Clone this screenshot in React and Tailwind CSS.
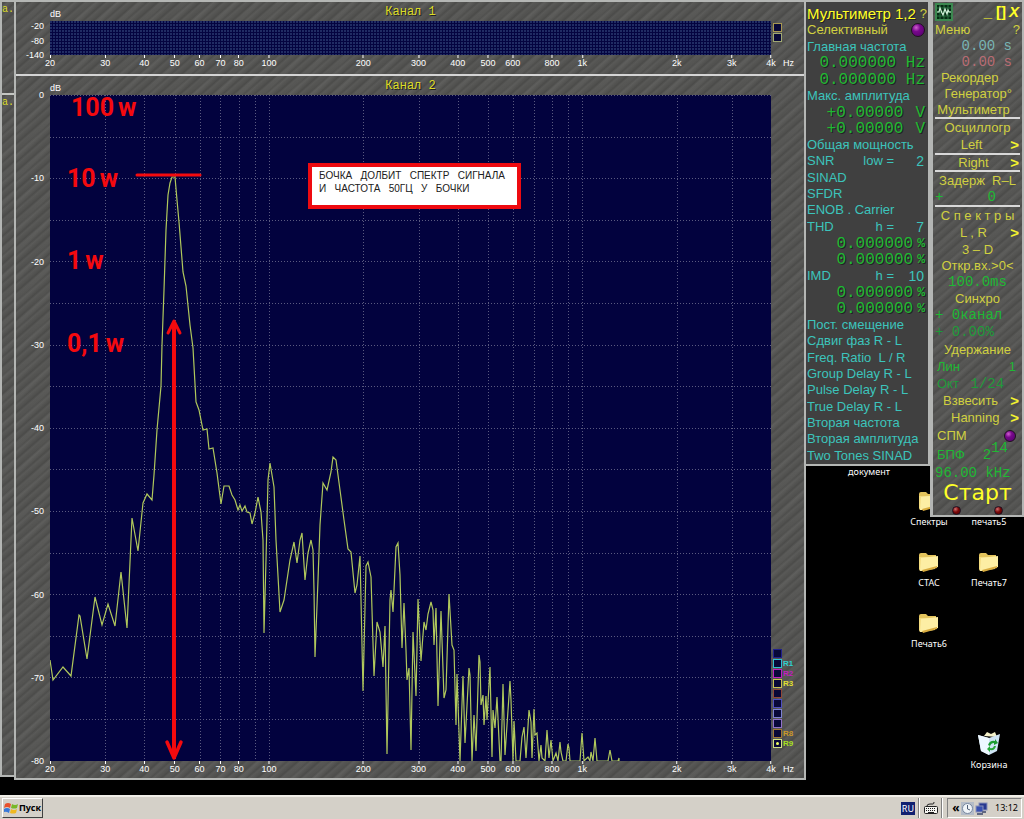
import clsx from 'clsx';

const HATCH = 'bg-[#555553] bg-[repeating-linear-gradient(139deg,#00000000_0px,#00000016_2px,#ffffff0a_4px,#00000000_7px),repeating-linear-gradient(134deg,#0000000a_0px,#ffffff06_5px,#00000008_11px,#0000000a_17px)]';

const F_MIN = 20;
const F_MAX = 4000;
const freqShare = (f) => Math.log(f / F_MIN) / Math.log(F_MAX / F_MIN);

const X_TICKS = [
    [20, '20'], [30, '30'], [40, '40'], [50, '50'], [60, '60'], [70, '70'], [80, '80'], [100, '100'],
    [200, '200'], [300, '300'], [400, '400'], [500, '500'], [600, '600'], [800, '800'],
    [1000, '1k'], [2000, '2k'], [3000, '3k'], [4000, '4k'],
];

const GRID_FREQS = [30, 40, 50, 60, 70, 80, 90, 100, 200, 300, 400, 500, 600, 700, 800, 900, 1000, 2000, 3000];

const SPECTRUM = `50,660 53,680 63,667 71,676 79,615 80,616 87,659 95,597 102,625 108,604 115,626 121,572 127,628
    132,518 138,551 143,503 147,494 152,500 154,475 157,430 161,386 162,345 164,290 166,230 168,195 170,183 172,177
    175,177 177,200 179,222 183,272 186,286 190,325 193,348 196,402 199,410 203,430 207,429 209,449 213,448 217,473
    221,504 224,486 229,486 232,495 235,500 238,510 240,505 242,511 245,506 247,512 250,513 252,524 255,513 258,497
    261,512 263,540 264,633 266,560 268,480 270,463 274,487 276,540 280,612 284,600 290,560 294,542 297,563 300,540
    302,533 305,580 308,553 311,540 313,550 314,590 315,657 318,580 320,525 323,483 327,490 331,472 333,457 336,460
    340,490 344,520 348,549 351,552 355,593 357,585 360,556 361,600 363,691 366,566 368,562 371,577 374,676 377,622
    380,632 383,667 385,626 387,754 390,600 391,590 393,612 396,547 398,543 400,575 402,648 404,603 406,650 407,680
    409,668 411,750 413,632 416,696 418,599 421,661 424,622 426,630 428,614 431,602 433,610 434,645 436,608 438,706
    441,611 444,698 446,690 449,594 452,645 454,650 456,725 457,674 460,761 463,676 465,743 469,668 470,675 472,761
    474,715 476,751 479,655 480,662 481,705 483,695 484,725 486,696 487,720 490,667 492,757 493,710 495,728 497,697
    500,761 501,761 503,684 505,755 507,725 510,681 511,700 513,761 514,721 516,761 520,761 522,737 524,727 526,758
    529,710 531,722 532,758 534,709 535,735 537,733 539,761 541,745 542,758 545,761 547,730 549,758 551,740 553,761
    556,753 558,761 560,742 561,752 563,761 566,761 568,744 569,748 570,761 580,761 582,733 584,761 588,757 590,761
    591,752 593,761 595,738 597,761 608,761 610,750 612,761 618,761 619,758 619,761`;

const MARKERS = [
    { color: 'border-[#20208c]' },
    { color: 'border-[#30c0d0]', name: 'R1', text: 'text-[#30d0d0]' },
    { color: 'border-[#c020c0]', name: 'R2', text: 'text-[#c020c0]' },
    { color: 'border-[#c8c050]', name: 'R3', text: 'text-[#e0e030]' },
    { color: 'border-[#904838]' },
    { color: 'border-[#5050c0]' },
    { color: 'border-[#7c80d0]' },
    { color: 'border-[#9070c8]' },
    { color: 'border-[#a07838]', name: 'R8', text: 'text-[#c89828]' },
    { color: 'border-[#d0e080]', name: 'R9', text: 'text-[#a8e020]', on: true },
];

const FREE_MARKERS = [{ color: 'border-[#a89850]' }, { color: 'border-[#a0a870]' }];

function Markers({ items, id }) {
    return (
        <div className="flex flex-col gap-px">
            {items.map((m, i) => (
                <label key={i} className="flex h-[9px] items-center gap-px">
                    <span className={clsx('relative flex size-[9px] items-center justify-center border bg-[#080838]', m.color)}>
                        <input type="checkbox" defaultChecked={m.on} aria-label={m.name || `${id}-${i + 1}`} className="peer absolute inset-0 appearance-none" />
                        <span className="size-[3px] rounded-full peer-checked:bg-[#f0ff60]"></span>
                    </span>
                    <span className={clsx('text-[8px] leading-[9px] font-bold', m.text)}>{m.name}</span>
                </label>
            ))}
        </div>
    );
}

function FreqAxis({ height }) {
    return (
        <>
            <div></div>
            <div className={clsx('relative', height)}>
                {X_TICKS.map(([f, text]) => (
                    <div key={f} className="absolute top-0 flex -translate-x-1/2 flex-col items-center" style={{ left: `${freqShare(f) * 100}%` }}>
                        <span className="h-[3px] w-px bg-white"></span>
                        <span className="text-[9px] leading-[11px]">{text}</span>
                    </div>
                ))}
            </div>
            <div className="pt-[3px] pl-3 text-[9px] leading-[11px]">Hz</div>
        </>
    );
}

function ChannelHeader({ title, height }) {
    return (
        <div className={clsx('col-start-2 grid grid-cols-3 items-center', height)}>
            <span className="self-end text-[9px] leading-[13px]">dB</span>
            <h2 className="text-center font-['Liberation_Mono',monospace] text-[12px] leading-4 text-[#dcdc28] [text-shadow:1px_1px_0_#222]">{title}</h2>
        </div>
    );
}

function LevelAxis({ levels }) {
    return (
        <div className="relative">
            {levels.map(([share, text]) => (
                <span key={text} className="absolute right-[6px] -translate-y-1/2 text-[9px] leading-[10px]" style={{ top: `${share * 100}%` }}>{text}</span>
            ))}
        </div>
    );
}

function Plot() {
    return (
        <svg className="absolute inset-0 size-full" viewBox="50 95 721 666" preserveAspectRatio="none" fill="none">
            <g stroke="#5a5a80" strokeDasharray="1 2" shapeRendering="crispEdges">
                {Array.from({ length: 17 }, (_, i) => (
                    <line key={i} x1="50" x2="771" y1={95.5 + Math.round(i * 41.6)} y2={95.5 + Math.round(i * 41.6)} />
                ))}
                {GRID_FREQS.map((f) => {
                    const x = Math.round(50 + 721 * freqShare(f)) + 0.5;
                    return <line key={f} x1={x} x2={x} y1="95" y2="761" />;
                })}
            </g>
            <polyline points={SPECTRUM} stroke="#b0c85c" strokeWidth="1.2" />
            <g stroke="#f40a0e" strokeLinecap="round" strokeLinejoin="round">
                <path d="M137 175H200" strokeWidth="3" />
                <path d="M174 324V756" strokeWidth="4" />
                <path d="M168 333L174 321L180 333M174 322V332" strokeWidth="3" />
                <path d="M167 742L174 758L181 742M174 740V758" strokeWidth="3.5" />
            </g>
        </svg>
    );
}

const NOTES = [
    { value: '100', unit: 'w', place: 'left-[21px] top-0' },
    { value: '10', unit: 'w', place: 'left-[17px] top-[71px]' },
    { value: '1', unit: 'w', place: 'left-[17px] top-[153px]' },
    { value: '0,1', unit: 'w', place: 'left-[17px] top-[236px]' },
];

function SpectrumWindow() {
    return (
        <main className={clsx('flex min-w-0 flex-1 flex-col border-2 border-[#b4b6b4] text-white', HATCH)}>
            <section className="grid grid-cols-[34px_1fr_33px] border-b-2 border-[#d4d4d4]">
                <ChannelHeader title="Канал 1" height="h-[19px]" />
                <div></div>
                <LevelAxis levels={[[0.15, '-20'], [0.6, '-80'], [1, '-140']]} />
                <div className="h-[34px] bg-[#040440] bg-[radial-gradient(circle_at_1px_1px,#34487c_0.5px,transparent_1px)] bg-size-[3px_3px]"></div>
                <div className="h-5 pt-[2px] pl-[2px]">
                    <Markers items={FREE_MARKERS} id="ch1" />
                </div>
                <FreqAxis height="h-[19px]" />
            </section>
            <section className="grid min-h-0 flex-1 grid-cols-[34px_1fr_33px] grid-rows-[19px_1fr_17px]">
                <ChannelHeader title="Канал 2" height="h-[19px]" />
                <div></div>
                <LevelAxis levels={[0, 1, 2, 3, 4, 5, 6, 7, 8].map((n) => [n / 8, n ? `-${n * 10}` : '0'])} />
                <div className="relative bg-[#02023e]">
                    <Plot />
                    {NOTES.map((n) => (
                        <p key={n.value} className={clsx("absolute flex items-end gap-1 font-['Roboto',sans-serif] text-[25px] leading-[26px] font-bold whitespace-nowrap text-[#f40a0e]", n.place)}>
                            {n.value}<span>{n.unit}</span>
                        </p>
                    ))}
                    <p className="absolute top-[68px] left-[258px] h-[46px] w-[213px] border-4 border-[#ee0a10] bg-white pt-[2px] pl-[7px] text-[10px] leading-[13px] whitespace-pre text-[#202020]">
                        {'БОЧКА   ДОЛБИТ   СПЕКТР   СИГНАЛА\nИ   ЧАСТОТА   50ГЦ   У   БОЧКИ'}
                    </p>
                </div>
                <div className="flex flex-col justify-end pb-[13px] pl-[2px]">
                    <Markers items={MARKERS} id="ch2" />
                </div>
                <FreqAxis height="h-[17px]" />
            </section>
        </main>
    );
}

function BackWindow() {
    return (
        <aside className={clsx("mb-[3px] flex w-3.5 shrink-0 flex-col border-2 border-r-0 border-[#b4b6b4] font-['Liberation_Mono',monospace] text-[10px] leading-4 text-[#dcdc28]", HATCH)}>
            <div className="h-[93px] border-b-2 border-[#c4c6c2]">а.</div>
            <div>а.</div>
        </aside>
    );
}

function Led({ className }) {
    return <span className={clsx('shrink-0 rounded-full border border-[#201020]', className)}></span>;
}

const PURPLE = 'bg-[radial-gradient(circle_at_35%_30%,#d060d0,#78088c_35%,#500068)]';
const RED = 'size-[9px] bg-[radial-gradient(circle_at_35%_30%,#d07070,#7c0808_45%,#500000)]';

const METERS = [
    { name: 'Главная частота', values: ['0.000000 Hz', '0.000000 Hz'] },
    { name: 'Макс. амплитуда', values: ['+0.00000', '+0.00000'], unit: 'V' },
    { name: 'Общая мощность' },
    { name: 'SNR', param: 'low =', amount: '2' },
    { name: 'SINAD' },
    { name: 'SFDR' },
    { name: 'ENOB . Carrier' },
    { name: 'THD', param: 'h =', amount: '7', values: ['0.000000', '0.000000'], unit: '%' },
    { name: 'IMD', param: 'h =', amount: '10', values: ['0.000000', '0.000000'], unit: '%' },
    { name: 'Пост. смещение' },
    { name: 'Сдвиг фаз R - L' },
    { name: 'Freq. Ratio  L / R' },
    { name: 'Group Delay R - L' },
    { name: 'Pulse Delay R - L' },
    { name: 'True Delay R - L' },
    { name: 'Вторая частота' },
    { name: 'Вторая амплитуда' },
    { name: 'Two Tones SINAD' },
];

function Meter({ meter }) {
    return (
        <>
            <button className="flex items-center whitespace-pre text-[#3cc4bc]">
                {meter.name}
                {meter.param && <span className="ml-auto">{meter.param}</span>}
                {meter.amount && <span className="w-[34px] pr-1 text-right text-[14px]">{meter.amount}</span>}
            </button>
            {meter.values?.map((v, i) => (
                <div key={i} className="flex items-center justify-end pt-px pr-[3px] font-['Liberation_Mono',monospace] text-[16px] leading-4 whitespace-pre text-[#20b834]">
                    {v}
                    {meter.unit === 'V' && <span className="pl-3">V</span>}
                    {meter.unit === '%' && <span className="pl-1 text-[13px] font-bold">%</span>}
                </div>
            ))}
        </>
    );
}

function Multimeter() {
    return (
        <section className="w-[124px] shrink-0 self-start border-2 border-l-0 border-[#b4b6b4] bg-[#404040] pl-px text-[13px] leading-4 text-[#d0d040] [text-shadow:1px_1px_0_#222]">
            <header className="flex h-5 items-center justify-between pt-[3px] pr-px">
                <h1 className="text-[15px] leading-4 font-medium whitespace-nowrap text-[#ffff28]">Мультиметр 1,2</h1>
                <button>?</button>
            </header>
            <div className="grid h-[442px] auto-rows-fr">
                <button className="flex items-center justify-between pr-[3px]">Селективный<Led className={clsx('size-3.5', PURPLE)} /></button>
                {METERS.map((m) => <Meter key={m.name} meter={m} />)}
            </div>
        </section>
    );
}

function Row({ children, className = 'h-[17px] justify-center', arrow }) {
    return (
        <button className={clsx('relative flex w-full items-center whitespace-pre', className)}>
            {children}
            {arrow && <span className="absolute right-px text-[15px] font-bold text-[#f4f430]">&gt;</span>}
        </button>
    );
}

const MONO = "font-['Liberation_Mono',monospace] text-[14px] text-[#20b834]";
const RULE = 'border-b-2 border-[#d8d8d8]';

function ControlPanel() {
    return (
        <aside className={clsx('w-[94px] shrink-0 self-start border-2 border-l-[3px] border-[#b4b6b4] px-0.5 text-[13px] leading-4 text-[#d0d040] [text-shadow:1px_1px_0_#222]', HATCH)}>
            <header className="flex h-[19px] items-center text-[15px] font-bold text-[#ffff28]">
                <svg className="mr-auto" width="18" height="18" viewBox="0 0 18 18" fill="none">
                    <rect x="1" y="1" width="16" height="16" fill="#062c14" stroke="#3c8850" strokeWidth="2" />
                    <path d="M5 2V16M9 2V16M13 2V16M2 5H16M2 9H16M2 13H16" stroke="#287040" />
                    <path d="M2 9H4L5 5L7 10L8 12L10 6L12 11L13 7L14 9H16" stroke="#d0f0d8" strokeWidth="1.2" />
                </svg>
                <button className="w-3">_</button>
                <button className="w-3.5">[]</button>
                <button className="w-3 italic">X</button>
            </header>
            <div className="flex h-[17px] items-center justify-between"><button>Меню</button><button>?</button></div>
            <Row className="h-4 justify-end pr-2 font-['Liberation_Mono',monospace] text-[14px] text-[#78b4b4]">0.00 s</Row>
            <Row className="h-4 justify-end pr-2 font-['Liberation_Mono',monospace] text-[14px] text-[#b86c74]">0.00 s</Row>
            <Row className="h-4 pl-1.5">Рекордер</Row>
            <Row className="h-4 justify-end pr-2">Генератор°</Row>
            <Row className={clsx('h-[17px] justify-center pr-2', RULE)}>Мультиметр</Row>
            <Row>Осциллогр</Row>
            <Row className={clsx('h-[19px] justify-center pr-3', RULE)} arrow>Left</Row>
            <Row className={clsx('h-[17px] justify-center pr-2', RULE)} arrow>Right</Row>
            <Row>Задерж  R–L</Row>
            <Row className={clsx('h-[18px] justify-between pr-6', MONO, RULE)}><span>+</span><span>0</span></Row>
            <Row>С п е к т р ы</Row>
            <Row className="h-[17px] justify-center pr-2" arrow>L , R</Row>
            <Row>3 – D</Row>
            <Row className="h-4 justify-center">{'Откр.вх.>0<'}</Row>
            <Row className={clsx('h-4 justify-center', MONO)}>100.0ms</Row>
            <Row>Синхро</Row>
            <Row className={clsx('h-4', MONO)}>+ 0канал</Row>
            <Row className="h-[18px] font-['Liberation_Mono',monospace] text-[14px] text-[#1f9a3a]">+ 0.00%</Row>
            <Row>Удержание</Row>
            <Row className="h-[17px] justify-between pr-1 pl-0.5 text-[#20b834]"><span>Лин</span><span>1</span></Row>
            <Row className="h-[17px] gap-2 pl-0.5 text-[#1f9a3a]">Окт <span className="font-['Liberation_Mono',monospace] text-[14px]">1/24</span></Row>
            <Row className="h-[17px] pl-2" arrow>Взвесить</Row>
            <Row className="h-[17px] pl-4" arrow>Hanning</Row>
            <Row className="h-[19px] justify-between pr-1 pl-0.5">СПМ<Led className={clsx('size-3', PURPLE)} /></Row>
            <Row className="h-5 justify-between pr-3 pl-0.5 text-[#20b834]">
                <span>БПФ</span>
                <span className="font-['Liberation_Mono',monospace] text-[14px]">2<sup className="text-[14px] leading-none">14</sup></span>
            </Row>
            <Row className={clsx('h-4', MONO)}>96.00 kHz</Row>
            <Row className="h-6 justify-center font-['DejaVu_Sans',sans-serif] text-[22px] leading-6 text-[#ffff28]">Старт</Row>
            <div className="flex h-[10px] items-center justify-between px-[17px]"><Led className={RED} /><Led className={RED} /></div>
        </aside>
    );
}

function Folder() {
    return (
        <svg width="22" height="22" viewBox="0 0 22 22">
            <path d="M1 4Q1 2 3 2H8L10 4H18V8H1Z" fill="#e4c45c" />
            <path d="M1 6H17L17 18L3 20Q1 20 1 18Z" fill="#f4dc80" />
            <path d="M3 7L20 5V16L5 20H2Z" fill="#fdeea4" />
            <path d="M4 19L19 15V17L5 21Z" fill="#d8ac40" />
        </svg>
    );
}

function RecycleBin() {
    return (
        <svg width="24" height="24" viewBox="0 0 24 24">
            <path d="M7 5L10 1L14 3L18 1L20 6Z" fill="#f4f0c8" />
            <path d="M1 4L12 7L23 3L20 20L12 24L4 20Z" fill="#cfe4f4" />
            <path d="M1 4L12 7V24L4 20Z" fill="#eef8ff" />
            <path d="M11 14Q13 9 18 10V8L21 12L17 14V12Q14 12 13 15Z" fill="#1c9c30" />
            <path d="M19 15Q18 20 13 19V21L10 18L13 15V17Q16 18 17 15Z" fill="#28a838" />
        </svg>
    );
}

const SHORTCUTS = [
    { name: 'документ', place: 'right-[125px] top-[440px]' },
    { name: 'Спектры', place: 'right-[65px] top-[490px]' },
    { name: 'печать5', place: 'right-[5px] top-[490px]' },
    { name: 'СТАС', place: 'right-[65px] top-[551px]' },
    { name: 'Печать7', place: 'right-[5px] top-[551px]' },
    { name: 'Печать6', place: 'right-[65px] top-[612px]' },
    { name: 'Корзина', place: 'right-[5px] bottom-[23px]', bin: true },
];

function Taskbar() {
    return (
        <footer className="flex h-6 shrink-0 items-center border-t-2 border-[#f0eee8] bg-[#d4d0c8] px-0.5 font-['Noto_Sans',sans-serif] text-[9px] leading-4 text-black">
            <button className="flex h-5 items-center gap-px border border-t-white border-r-[#404040] border-b-[#404040] border-l-white px-px font-bold">
                <svg width="14" height="14" viewBox="0 0 14 14">
                    <path d="M1 3Q4 1 7 3L6 7Q3 5 0 7Z" fill="#e8502c" />
                    <path d="M8 3Q11 5 14 3L13 7Q10 8 7 7Z" fill="#78b828" />
                    <path d="M0 8Q3 6 6 8L5 12Q2 10 0 11Z" fill="#3878d8" />
                    <path d="M7 8Q10 10 13 8L12 12Q9 13 6 12Z" fill="#f0b820" />
                </svg>
                Пуск
            </button>
            <div className="ml-auto flex h-full items-center">
                <button className="bg-[#102070] px-px text-[9px] leading-[13px] text-white">RU</button>
                <div className="mr-1 ml-[3px] h-5 border-r border-l border-r-white border-l-[#808080]"></div>
                <svg width="14" height="14" viewBox="0 0 14 14" fill="none" stroke="#202020">
                    <path d="M3 5Q3 3 6 3H9Q10 3 10 1" />
                    <rect x="0.5" y="5.5" width="13" height="7" rx="1" fill="#f4f4f0" />
                    <path d="M2 7.5H12M2 9.5H12" strokeDasharray="1 1" />
                    <path d="M4 11.5H10" />
                </svg>
                <div className="mr-1 ml-[3px] h-5 border-r border-l border-r-white border-l-[#808080]"></div>
                <div className="flex h-5 items-center border border-t-[#808080] border-r-white border-b-white border-l-[#808080] px-[3px]">
                    <button className="w-[10px] text-[12px] leading-4 font-bold">«</button>
                    <svg width="13" height="13" viewBox="0 0 13 13" fill="none">
                        <rect width="13" height="13" fill="#b4bcc8" />
                        <circle cx="6.500" cy="6.500" r="5" fill="#f0f4f8" stroke="#7888a0" />
                        <path d="M6.500 3V7L9 8" stroke="#506078" />
                    </svg>
                    <svg className="ml-px" width="13" height="13" viewBox="0 0 13 13">
                        <rect x="4" y="1" width="8" height="7" fill="#283890" stroke="#8890b8" />
                        <rect x="1" y="4" width="7" height="6" fill="#3850b0" stroke="#8890b8" />
                        <path d="M2 12H8M7 10H11" stroke="#606880" strokeWidth="2" />
                    </svg>
                    <time className="pl-[7px]">13:12</time>
                </div>
            </div>
        </footer>
    );
}

export default function App() {
    return (
        <div className="flex h-screen flex-col bg-black font-['Liberation_Sans',sans-serif]">
            <div className="relative isolate flex min-h-0 flex-1">
                {SHORTCUTS.map((s) => (
                    <a key={s.name} href="#" className={clsx("absolute -z-10 flex w-[60px] flex-col items-center gap-[3px] font-['Noto_Sans',sans-serif] text-[9px] leading-[14px] text-white", s.place)}>
                        {s.bin ? <RecycleBin /> : <Folder />}
                        {s.name}
                    </a>
                ))}
                <div className="flex min-w-0 flex-1 pb-[15px]">
                    <BackWindow />
                    <SpectrumWindow />
                </div>
                <Multimeter />
                <ControlPanel />
            </div>
            <Taskbar />
        </div>
    );
}
